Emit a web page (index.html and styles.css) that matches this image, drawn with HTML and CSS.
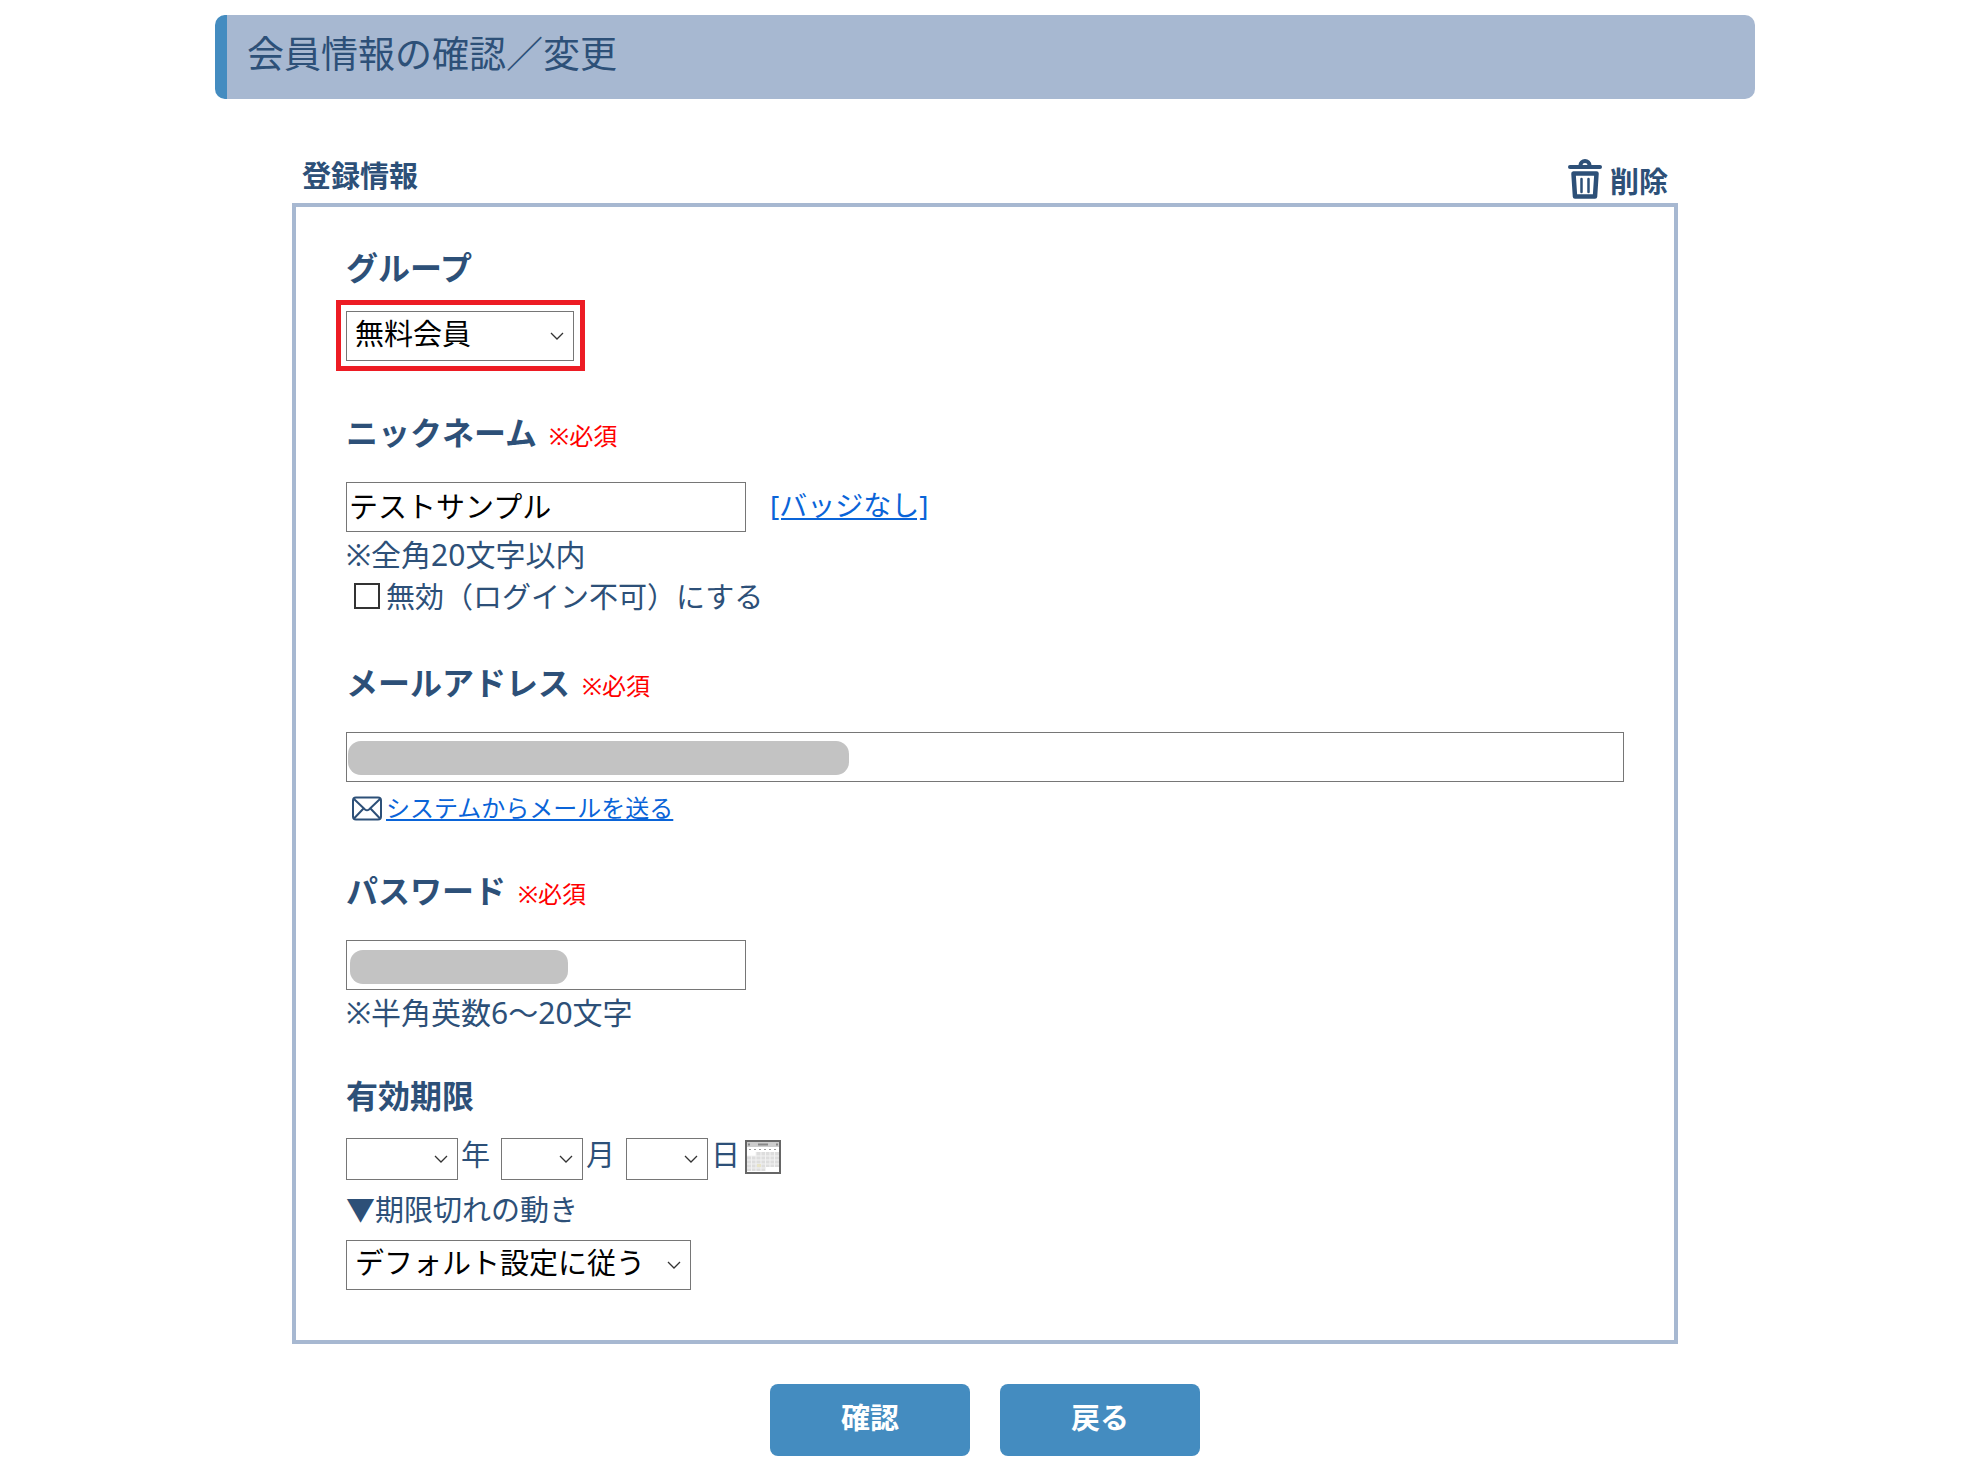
FILE: index.html
```
<!DOCTYPE html>
<html lang="ja">
<head>
  <meta charset="UTF-8" />
  <meta name="viewport" content="width=device-width, initial-scale=1.0"/>
  <title>会員情報の確認／変更</title>
  <link rel="stylesheet" href="styles.css">
</head>
<body>

  <div class="container">
    <h1>会員情報の確認／変更</h1>

    <form class="member-form">
      <div class="form-head">
        <h2>登録情報</h2>
        <button type="button" class="delete-btn">
          <svg width="34" height="40" viewBox="0 0 34 40" fill="none" stroke="currentColor" stroke-linecap="round" stroke-linejoin="round">
            <path d="M2 8H32" stroke-width="4"/>
            <path d="M12.500 7V6a4.500 4 0 0 1 9 0v1" stroke-width="4"/>
            <path d="M5.500 14.500H28.500L27 37.500H7Z" stroke-width="4.500"/>
            <path d="M13.500 20V33M20.500 20V33" stroke-width="2.500"/>
          </svg>
          削除
        </button>
      </div>

      <div class="panel">
        <section class="field">
          <label class="field-name" for="group">グループ</label>
          <div class="marked">
            <select id="group" class="group-select">
              <option>無料会員</option>
            </select>
          </div>
        </section>

        <section class="field">
          <div class="field-title">
            <label class="field-name" for="nickname">ニックネーム</label>
            <span class="required">※必須</span>
          </div>
          <div class="input-row">
            <input type="text" id="nickname" class="short" value="テストサンプル" />
            <a href="#" class="badge-link">[バッジなし]</a>
          </div>
          <p class="note">※全角20文字以内</p>
          <div class="check-row">
            <input type="checkbox" id="disabled" />
            <label for="disabled">無効（ログイン不可）にする</label>
          </div>
        </section>

        <section class="field">
          <div class="field-title">
            <label class="field-name" for="email">メールアドレス</label>
            <span class="required">※必須</span>
          </div>
          <div class="masked">
            <input type="text" id="email" />
            <span class="mask mask-email"></span>
          </div>
          <div class="mail-row">
            <svg width="32" height="25" viewBox="0 0 32 25" fill="none" stroke="currentColor" stroke-width="2" stroke-linejoin="round">
              <rect x="2" y="1.500" width="28" height="22" rx="3"/>
              <path d="M3 3L14 13.500Q16 15 18 13.500L29 3M3 22.500L12.500 12.500M29 22.500L19.500 12.500"/>
            </svg>
            <a href="#">システムからメールを送る</a>
          </div>
        </section>

        <section class="field">
          <div class="field-title">
            <label class="field-name" for="password">パスワード</label>
            <span class="required">※必須</span>
          </div>
          <div class="masked">
            <input type="text" id="password" class="short" />
            <span class="mask mask-password"></span>
          </div>
          <p class="note">※半角英数6～20文字</p>
        </section>

        <section class="field">
          <label class="field-name" for="year">有効期限</label>
          <div class="date-row">
            <select id="year" class="year-select"><option></option></select>
            <label for="year">年</label>
            <select id="month"><option></option></select>
            <label for="month">月</label>
            <select id="day"><option></option></select>
            <label for="day">日</label>
            <button type="button" class="calendar-btn" aria-label="カレンダー">
              <svg width="36" height="34" viewBox="0 0 36 34">
                <rect x="1" y="1" width="34" height="32" fill="#fff" stroke="#666" stroke-width="2"/>
                <rect x="2" y="2" width="32" height="5" fill="#ccc"/>
                <path d="M3 4.500H5M31 4.500H33M13 4.500H23" stroke="#888" stroke-width="2"/>
                <path d="M4 9.500H33" stroke="#999" stroke-dasharray="2 3"/>
                <path d="M11 12H34V27H21V31H2V16H11Z" fill="#ddd"/>
                <path d="M2 16H34M2 20H34M2 24H34M2 28H21M6.500 16V31M11 12V31M16 12V31M20.500 12V31M25 12V27M29.500 12V27" stroke="#f2f2f2"/>
                <rect x="12" y="24" width="4" height="3" fill="#e8e4c8"/>
              </svg>
            </button>
          </div>
          <label class="expired-label" for="expired">▼期限切れの動き</label>
          <select id="expired" class="expired-select">
            <option>デフォルト設定に従う</option>
          </select>
        </section>
      </div>

      <div class="actions">
        <button type="submit">確認</button>
        <button type="button">戻る</button>
      </div>
    </form>
  </div>

</body>
</html>
```

FILE: styles.css
```
* {
  box-sizing: border-box;
}

body {
  margin: 0;
  padding: 15px 16px 16px 18px;
  font-family: 'Noto Sans', 'Noto Sans CJK JP', sans-serif;
  font-size: 29px;
  line-height: 42px;
  color: #2d5078;
  background: #fff;
}

.container {
  max-width: 1540px;
  margin: auto;
}

h1 {
  margin: 0;
  padding: 13px 20px 19px;
  border-left: 12px solid #448cc0;
  border-radius: 10px;
  background: #a7b8d1;
  font-size: 37px;
  font-weight: normal;
  line-height: 52px;
}

.member-form {
  width: 90%;
  margin: 56px auto 0;
}

.form-head {
  display: flex;
  justify-content: space-between;
  padding: 0 10px;
}

h2 {
  margin: 0;
  font-size: 29px;
  line-height: 42px;
}

button {
  padding: 0;
  border: none;
  background: none;
  color: inherit;
  font: inherit;
  cursor: pointer;
}

.delete-btn {
  display: flex;
  align-items: flex-end;
  gap: 8px;
  height: 48px;
  font-weight: bold;
}

.delete-btn svg {
  align-self: center;
}

.panel {
  padding: 40px 50px 50px;
  border: 4px solid #a7b8d1;
}

.field + .field {
  margin-top: 41px;
}

.field-name {
  display: block;
  font-size: 32px;
  font-weight: bold;
  line-height: 42px;
}

.field-title {
  display: flex;
  align-items: baseline;
  gap: 12px;
  margin-bottom: 28px;
}

.required {
  color: #f00;
  font-size: 24px;
  line-height: 24px;
}

input[type="text"] {
  display: block;
  width: 100%;
  height: 50px;
  padding: 0 2px 4px;
  border: 1px solid #767676;
  border-radius: 0;
  background: #fff;
  color: #000;
  font: inherit;
}

input.short {
  width: 400px;
}

select {
  display: block;
  width: 82px;
  height: 42px;
  padding: 0 8px 4px;
  border: 1px solid #767676;
  border-radius: 0;
  color: #000;
  font: inherit;
  appearance: none;
  background: #fff url("data:image/svg+xml,%3Csvg xmlns='http://www.w3.org/2000/svg' width='14' height='8' fill='none' stroke='%23333' stroke-width='1.300'%3E%3Cpath d='M1 1l6 6 6-6'/%3E%3C/svg%3E") no-repeat right 9px center;
}

.group-select {
  width: 228px;
  height: 50px;
}

.year-select {
  width: 112px;
}

.expired-select {
  width: 345px;
  height: 50px;
}

a {
  color: #0a64d8;
}

.marked {
  position: relative;
  width: fit-content;
  margin: 22px 0 51px;
}

/* red frame around the group select */
.marked::after {
  content: "";
  position: absolute;
  inset: -11px -11px -10px -10px;
  border: 5px solid #ed1c24;
  pointer-events: none;
}

.input-row {
  display: flex;
  align-items: center;
  gap: 24px;
}

.badge-link {
  padding-bottom: 4px;
  font-size: 28px;
}

.note {
  margin: 2px 0 0;
  font-size: 30px;
}

.check-row {
  display: flex;
  align-items: center;
  padding: 0 0 3px 8px;
}

.check-row input {
  appearance: none;
  width: 26px;
  height: 26px;
  margin: 0 6px 3px 0;
  border: 2px solid #333;
  background: #fff;
}

.masked {
  position: relative;
}

.mask {
  position: absolute;
  top: 9px;
  left: 2px;
  height: 34px;
  border-radius: 13px;
  background: #c3c3c3;
}

.mask-email {
  width: 501px;
}

.mask-password {
  top: 10px;
  left: 4px;
  width: 218px;
}

.mail-row {
  display: flex;
  align-items: center;
  gap: 3px;
  margin-top: 5px;
  padding-left: 5px;
  font-size: 24px;
}

.date-row {
  display: flex;
  margin-top: 21px;
}

.date-row label {
  width: 43px;
  padding-left: 3px;
  line-height: 34px;
}

.date-row label:last-of-type {
  width: 37px;
}

.calendar-btn {
  display: block;
  height: 34px;
  margin-top: 2px;
}

.calendar-btn svg {
  display: block;
}

.expired-label {
  display: block;
  margin: 9px 0;
}

.actions {
  display: flex;
  justify-content: center;
  gap: 30px;
  margin-top: 40px;
}

.actions button {
  width: 200px;
  height: 72px;
  padding-bottom: 4px;
  border-radius: 8px;
  background: #448cc0;
  color: #fff;
  font-weight: bold;
}
```
